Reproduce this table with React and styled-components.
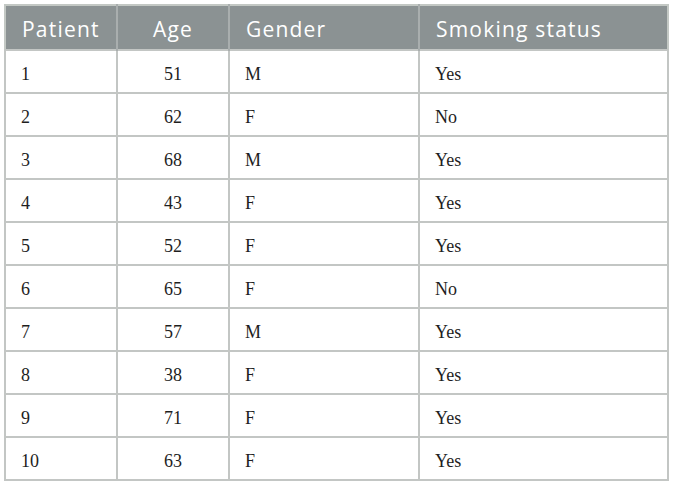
import React from "react";
import styled, { createGlobalStyle } from "styled-components";

const GlobalStyle = createGlobalStyle`
  body {
    margin: 0;
    background: #ffffff;
  }
`;

const Page = styled.div`
  padding: 4px 6px 4px 4px;
`;

const Table = styled.table`
  border-collapse: collapse;
  width: 663px;
  table-layout: fixed;
  border: 2px solid #c3c8c4;
`;

const HeadCell = styled.th`
  background: #8b9293;
  color: #ffffff;
  font-family: "Open Sans", "Noto Sans", sans-serif;
  font-weight: 400;
  font-size: 21px;
  letter-spacing: 1.2px;
  height: 45px;
  padding: 2px 0 0 ${(p) => (p.center ? 0 : 16)}px;
  text-align: ${(p) => (p.center ? "center" : "left")};
  border-right: 2px solid #a9aeae;
  box-sizing: border-box;
  &:last-child {
    border-right: none;
  }
`;

const Cell = styled.td`
  font-family: "Liberation Serif", "Times New Roman", serif;
  font-size: 18px;
  color: #1e1e1e;
  height: 43px;
  padding: 5px 0 0 ${(p) => (p.center ? 0 : 15)}px;
  text-align: ${(p) => (p.center ? "center" : "left")};
  border: 2px solid #c3c6c4;
  box-sizing: border-box;
`;

const rows = [
  [1, 51, "M", "Yes"],
  [2, 62, "F", "No"],
  [3, 68, "M", "Yes"],
  [4, 43, "F", "Yes"],
  [5, 52, "F", "Yes"],
  [6, 65, "F", "No"],
  [7, 57, "M", "Yes"],
  [8, 38, "F", "Yes"],
  [9, 71, "F", "Yes"],
  [10, 63, "F", "Yes"],
];

export default function App() {
  return (
    <Page>
      <GlobalStyle />
      <Table>
        <colgroup>
          <col style={{ width: 112 }} />
          <col style={{ width: 112 }} />
          <col style={{ width: 190 }} />
          <col style={{ width: 249 }} />
        </colgroup>
        <thead>
          <tr>
            <HeadCell>Patient</HeadCell>
            <HeadCell center>Age</HeadCell>
            <HeadCell>Gender</HeadCell>
            <HeadCell>Smoking status</HeadCell>
          </tr>
        </thead>
        <tbody>
          {rows.map(([id, age, gender, smoking]) => (
            <tr key={id}>
              <Cell>{id}</Cell>
              <Cell center>{age}</Cell>
              <Cell>{gender}</Cell>
              <Cell>{smoking}</Cell>
            </tr>
          ))}
        </tbody>
      </Table>
    </Page>
  );
}
